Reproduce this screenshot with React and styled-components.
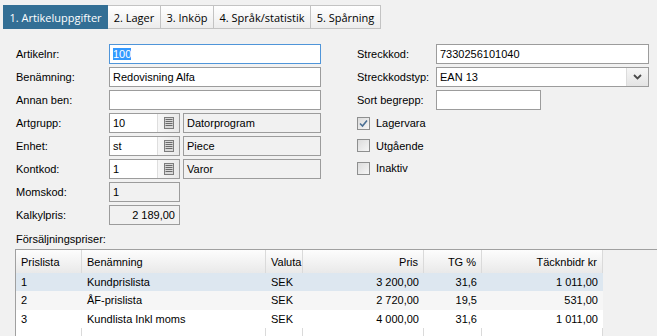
import React from "react";
import styled, { createGlobalStyle } from "styled-components";

const Global = createGlobalStyle`
  html, body { margin: 0; padding: 0; background: #f1f1f1; overflow: hidden; }
  body { font-family: "Liberation Sans", Arial, sans-serif; font-size: 11px; color: #000; }
`;

const Page = styled.div`
  width: 657px;
  height: 336px;
  overflow: hidden;
  background: #f1f1f1;
  padding-top: 5px;
  box-sizing: border-box;
`;

const TabBar = styled.div`
  display: flex;
  padding-left: 3px;
  height: 24px;
`;

const Tab = styled.div`
  box-sizing: border-box;
  height: 24px;
  width: ${(p) => p.$w}px;
  display: flex;
  align-items: center;
  justify-content: center;
  font-family: "Open Sans", "Noto Sans", sans-serif;
  font-size: 11px;
  color: ${(p) => (p.$active ? "#fff" : "#000")};
  background: ${(p) =>
    p.$active ? "#336f95" : "linear-gradient(#ffffff, #ececec)"};
  border: 1px solid ${(p) => (p.$active ? "#336f95" : "#c3c3c3")};
  border-left-width: ${(p) => (p.$first ? 1 : 0)}px;
`;

const Form = styled.div`
  display: grid;
  grid-template-columns: 305px 293px;
  column-gap: 36px;
  padding: 15px 0 0 16px;
`;

const Column = styled.div`
  display: flex;
  flex-direction: column;
  gap: 3px;
`;

const Row = styled.div`
  display: flex;
  align-items: center;
  height: 20px;
`;

const Label = styled.div`
  width: ${(p) => p.$w}px;
  flex: none;
`;

const Field = styled.div`
  box-sizing: border-box;
  width: ${(p) => p.$w}px;
  height: 20px;
  border: 1px solid ${(p) => (p.$focus ? "#4f95d9" : "#9c9c9c")};
  background: ${(p) => (p.$ro ? "#f1f1f1" : "#fff")};
  padding: 0 4px 0 3px;
  line-height: 18px;
  text-align: ${(p) => (p.$right ? "right" : "left")};
  white-space: nowrap;
  overflow: hidden;
  flex: none;
`;

const Selected = styled.span`
  background: #3399ff;
  color: #fff;
`;

const Lookup = styled.div`
  box-sizing: border-box;
  width: 71px;
  height: 20px;
  border: 1px solid #9c9c9c;
  background: #fff;
  display: flex;
  flex: none;
  margin-right: 3px;
`;

const LookupText = styled.div`
  flex: 1;
  padding-left: 3px;
  line-height: 18px;
`;

const IconButton = styled.div`
  width: 21px;
  border-left: 1px solid #dedede;
  background: linear-gradient(90deg, #f7f7f7, #e9e9e9);
  display: flex;
  align-items: center;
  justify-content: center;
`;

const Combo = styled.div`
  box-sizing: border-box;
  width: 213px;
  height: 20px;
  border: 1px solid #9c9c9c;
  background: #fff;
  display: flex;
`;

const ComboText = styled.div`
  flex: 1;
  padding-left: 3px;
  line-height: 18px;
`;

const ComboButton = styled.div`
  width: 21px;
  border-left: 1px solid #dcdcdc;
  background: linear-gradient(#f6f6f6, #e4e4e4);
  display: flex;
  align-items: center;
  justify-content: center;
`;

const Checks = styled.div`
  display: flex;
  flex-direction: column;
  margin-top: -1px;
`;

const CheckRow = styled.div`
  display: flex;
  align-items: center;
  height: 22.5px;
  gap: 6px;
`;

const Box = styled.div`
  box-sizing: border-box;
  width: 13px;
  height: 13px;
  border: 1px solid #8e8f8f;
  background: linear-gradient(135deg, #dcdcdc, #f6f6f6);
  display: flex;
  align-items: center;
  justify-content: center;
`;

const SectionLabel = styled.div`
  padding: 7px 0 0 16px;
  height: 14px;
  line-height: 14px;
`;

const TableWrap = styled.div`
  margin: 3px 0 0 15px;
  border-top: 1px solid #a0a0a0;
  border-left: 1px solid #a0a0a0;
  background: #f1f1f1;
`;

const GridRow = styled.div`
  display: grid;
  grid-template-columns: 66px 184px 37px 121px 58px 121px;
  height: ${(p) => p.$h}px;
  background: ${(p) => p.$bg};
  width: 587px;
`;

const HeadCell = styled.div`
  box-sizing: border-box;
  padding: 0 5px;
  display: flex;
  align-items: center;
  justify-content: ${(p) => (p.$right ? "flex-end" : "flex-start")};
  border-right: 1px solid #dadada;
  background: linear-gradient(#fdfdfd, #e9e9e9);
`;

const Cell = styled.div`
  box-sizing: border-box;
  padding: 0 5px;
  display: flex;
  align-items: center;
  justify-content: ${(p) => (p.$right ? "flex-end" : "flex-start")};
`;

const FillCell = styled.div`
  border-right: 1px solid #dadada;
  background: #fff;
`;

const ListIcon = () => (
  <svg width="10" height="12" viewBox="0 0 10 12">
    <rect x="0.5" y="0.5" width="9" height="11" fill="#d8d8d8" stroke="#7d7d7d" />
    {[2.5, 4.5, 6.5, 8.5].map((y) => (
      <line key={y} x1="1.5" x2="8.5" y1={y} y2={y} stroke="#6b6b6b" />
    ))}
  </svg>
);

const Chevron = () => (
  <svg width="9" height="6" viewBox="0 0 9 6">
    <path d="M1 1 L4.5 4.5 L8 1" fill="none" stroke="#4a4a4a" strokeWidth="1.8" />
  </svg>
);

const Check = () => (
  <svg width="9" height="9" viewBox="0 0 9 9">
    <path d="M1 4.5 L3.5 7 L8 1.5" fill="none" stroke="#4a6f94" strokeWidth="1.6" />
  </svg>
);

const tabs = [
  ["1. Artikeluppgifter", 105],
  ["2. Lager", 53],
  ["3. Inköp", 53],
  ["4. Språk/statistik", 97],
  ["5. Spårning", 70],
];

const rows = [
  ["1", "Kundprislista", "SEK", "3 200,00", "31,6", "1 011,00", "#dde7f0"],
  ["2", "ÅF-prislista", "SEK", "2 720,00", "19,5", "531,00", "#f6f6f6"],
  ["3", "Kundlista Inkl moms", "SEK", "4 000,00", "31,6", "1 011,00", "#ffffff"],
];

export default function App() {
  return (
    <Page>
      <Global />
      <TabBar>
        {tabs.map(([t, w], i) => (
          <Tab key={t} $w={w} $active={i === 0} $first={i === 0}>
            {t}
          </Tab>
        ))}
      </TabBar>
      <Form>
        <Column>
          <Row>
            <Label $w={93}>Artikelnr:</Label>
            <Field $w={212} $focus>
              <Selected>100</Selected>
            </Field>
          </Row>
          <Row>
            <Label $w={93}>Benämning:</Label>
            <Field $w={212}>Redovisning Alfa</Field>
          </Row>
          <Row>
            <Label $w={93}>Annan ben:</Label>
            <Field $w={212} />
          </Row>
          <Row>
            <Label $w={93}>Artgrupp:</Label>
            <Lookup>
              <LookupText>10</LookupText>
              <IconButton><ListIcon /></IconButton>
            </Lookup>
            <Field $w={138} $ro>Datorprogram</Field>
          </Row>
          <Row>
            <Label $w={93}>Enhet:</Label>
            <Lookup>
              <LookupText>st</LookupText>
              <IconButton><ListIcon /></IconButton>
            </Lookup>
            <Field $w={138} $ro>Piece</Field>
          </Row>
          <Row>
            <Label $w={93}>Kontkod:</Label>
            <Lookup>
              <LookupText>1</LookupText>
              <IconButton><ListIcon /></IconButton>
            </Lookup>
            <Field $w={138} $ro>Varor</Field>
          </Row>
          <Row>
            <Label $w={93}>Momskod:</Label>
            <Field $w={71} $ro>1</Field>
          </Row>
          <Row>
            <Label $w={93}>Kalkylpris:</Label>
            <Field $w={71} $ro $right>2 189,00</Field>
          </Row>
        </Column>
        <Column>
          <Row>
            <Label $w={79}>Streckkod:</Label>
            <Field $w={213}>7330256101040</Field>
          </Row>
          <Row>
            <Label $w={79}>Streckkodstyp:</Label>
            <Combo>
              <ComboText>EAN 13</ComboText>
              <ComboButton><Chevron /></ComboButton>
            </Combo>
          </Row>
          <Row>
            <Label $w={79}>Sort begrepp:</Label>
            <Field $w={105} />
          </Row>
          <Checks>
            <CheckRow>
              <Box><Check /></Box>
              Lagervara
            </CheckRow>
            <CheckRow>
              <Box />
              Utgående
            </CheckRow>
            <CheckRow>
              <Box />
              Inaktiv
            </CheckRow>
          </Checks>
        </Column>
      </Form>
      <SectionLabel>Försäljningspriser:</SectionLabel>
      <TableWrap>
        <GridRow $h={23}>
          <HeadCell>Prislista</HeadCell>
          <HeadCell>Benämning</HeadCell>
          <HeadCell>Valuta</HeadCell>
          <HeadCell $right>Pris</HeadCell>
          <HeadCell $right>TG %</HeadCell>
          <HeadCell $right>Täcknbidr kr</HeadCell>
        </GridRow>
        {rows.map((r) => (
          <GridRow key={r[0]} $h={18.3} $bg={r[6]}>
            <Cell>{r[0]}</Cell>
            <Cell>{r[1]}</Cell>
            <Cell>{r[2]}</Cell>
            <Cell $right>{r[3]}</Cell>
            <Cell $right>{r[4]}</Cell>
            <Cell $right>{r[5]}</Cell>
          </GridRow>
        ))}
        <GridRow $h={30}>
          {[0, 1, 2, 3, 4, 5].map((i) => (
            <FillCell key={i} />
          ))}
        </GridRow>
      </TableWrap>
    </Page>
  );
}
